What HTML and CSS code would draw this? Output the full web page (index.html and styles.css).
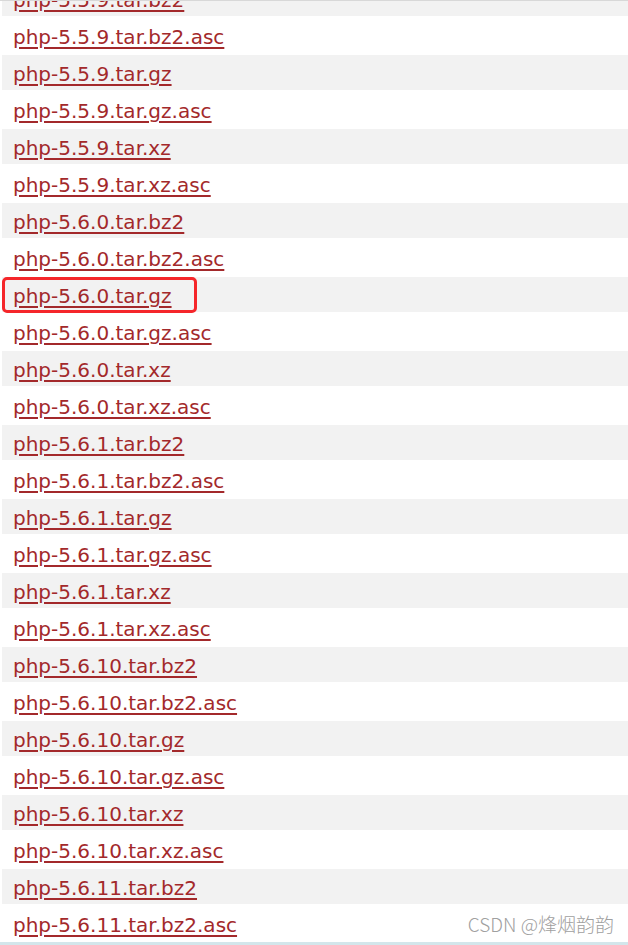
FILE: index.html
```html
<!DOCTYPE html>
<html>
<head>
    <title>Index of /distributions</title>
    <link rel="stylesheet" href="styles.css">
</head>
<body>

    <div class="listing">
        <ul class="file-list">
            <li><a href="#">php-5.5.9.tar.bz2</a></li>
            <li><a href="#">php-5.5.9.tar.bz2.asc</a></li>
            <li><a href="#">php-5.5.9.tar.gz</a></li>
            <li><a href="#">php-5.5.9.tar.gz.asc</a></li>
            <li><a href="#">php-5.5.9.tar.xz</a></li>
            <li><a href="#">php-5.5.9.tar.xz.asc</a></li>
            <li><a href="#">php-5.6.0.tar.bz2</a></li>
            <li><a href="#">php-5.6.0.tar.bz2.asc</a></li>
            <li class="marked"><a href="#">php-5.6.0.tar.gz</a></li>
            <li><a href="#">php-5.6.0.tar.gz.asc</a></li>
            <li><a href="#">php-5.6.0.tar.xz</a></li>
            <li><a href="#">php-5.6.0.tar.xz.asc</a></li>
            <li><a href="#">php-5.6.1.tar.bz2</a></li>
            <li><a href="#">php-5.6.1.tar.bz2.asc</a></li>
            <li><a href="#">php-5.6.1.tar.gz</a></li>
            <li><a href="#">php-5.6.1.tar.gz.asc</a></li>
            <li><a href="#">php-5.6.1.tar.xz</a></li>
            <li><a href="#">php-5.6.1.tar.xz.asc</a></li>
            <li><a href="#">php-5.6.10.tar.bz2</a></li>
            <li><a href="#">php-5.6.10.tar.bz2.asc</a></li>
            <li><a href="#">php-5.6.10.tar.gz</a></li>
            <li><a href="#">php-5.6.10.tar.gz.asc</a></li>
            <li><a href="#">php-5.6.10.tar.xz</a></li>
            <li><a href="#">php-5.6.10.tar.xz.asc</a></li>
            <li><a href="#">php-5.6.11.tar.bz2</a></li>
            <li><a href="#">php-5.6.11.tar.bz2.asc</a></li>
        </ul>
        <div class="bottom-bar"></div>
    </div>

    <div class="watermark">CSDN @烽烟韵韵</div>

</body>
</html>
```

FILE: styles.css
```css
html, body {
    margin: 0;
    height: 945px;
    overflow: hidden;
    background: #ffffff;
    font-family: "DejaVu Sans", Verdana, sans-serif;
}

body::before {
    content: "";
    position: absolute;
    top: 0;
    left: 0;
    right: 0;
    height: 1px;
    background: #d8d8d8;
    z-index: 2;
}

.listing {
    margin-top: -20px;
}

.file-list {
    list-style: none;
    margin: 0;
    padding: 0 0 0 2px;
}

.file-list li {
    position: relative;
    height: 37px;
    box-sizing: border-box;
    padding: 4px 0 0 11px;
    line-height: 33px;
    font-size: 20px;
}

.file-list li:nth-child(odd) {
    background: #f2f2f2;
    border-top: 1px solid #ffffff;
    border-bottom: 1px solid #ffffff;
    padding-top: 3px;
}

.file-list a {
    color: #a3292b;
    text-decoration: underline;
    text-decoration-thickness: 2px;
    text-underline-offset: 3px;
}

.marked::after {
    content: "";
    position: absolute;
    left: 0;
    top: 0;
    width: 195px;
    height: 36px;
    box-sizing: border-box;
    border: 3px solid #f5262a;
    border-radius: 5px;
}

.bottom-bar {
    height: 4px;
    background: #d3e6eb;
}

.watermark {
    position: absolute;
    right: 14px;
    bottom: 8px;
    font-family: "Noto Sans CJK SC", "DejaVu Sans", sans-serif;
    font-size: 19px;
    font-weight: 300;
    color: #a0a0a0;
    text-shadow: 0 0 2px #ffffff;
}
```
